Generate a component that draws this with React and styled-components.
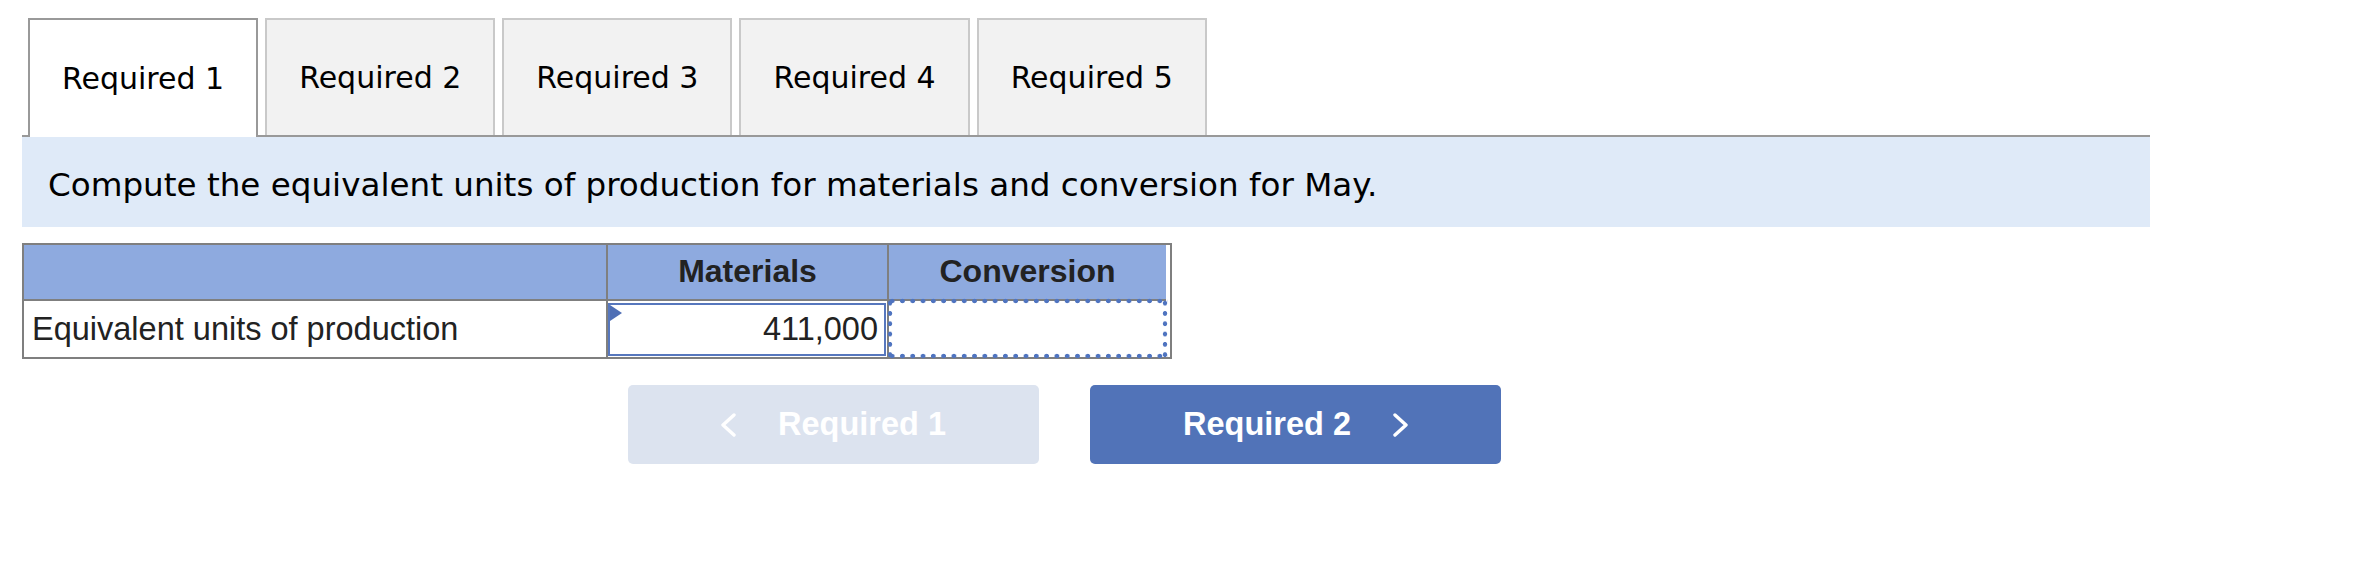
import styled, { createGlobalStyle } from 'styled-components'

const GlobalStyle = createGlobalStyle`
  html, body {
    margin: 0;
    padding: 0;
    background: #ffffff;
  }
`

const tabs = ['Required 1', 'Required 2', 'Required 3', 'Required 4', 'Required 5']

function Chevron({ dir }) {
  const points = dir === 'left' ? '13,2 2,12 13,22' : '2,2 13,12 2,22'
  return (
    <svg width="15" height="24" viewBox="0 0 15 24">
      <polyline
        points={points}
        fill="none"
        stroke="#ffffff"
        strokeWidth="3.4"
        strokeLinecap="round"
        strokeLinejoin="round"
      />
    </svg>
  )
}

function App() {
  return (
    <Page>
      <GlobalStyle />
      <TabBar>
        {tabs.map((t, i) => (
          <Tab key={t} $active={i === 0}>
            {t}
          </Tab>
        ))}
      </TabBar>
      <Instruction>
        Compute the equivalent units of production for materials and conversion for May.
      </Instruction>
      <Table>
        <HeadCell />
        <HeadCell>Materials</HeadCell>
        <HeadCell $last>Conversion</HeadCell>
        <LabelCell>Equivalent units of production</LabelCell>
        <InputCell>
          <AmountBox>
            <Marker />
            411,000
          </AmountBox>
        </InputCell>
        <EmptyCell>
          <DottedFrame />
        </EmptyCell>
      </Table>
      <NavRow>
        <NavButton $disabled>
          <Chevron dir="left" />
          Required 1
        </NavButton>
        <NavButton>
          Required 2
          <Chevron dir="right" />
        </NavButton>
      </NavRow>
    </Page>
  )
}

export default App

const Page = styled.div`
  width: 2128px;
  padding: 18px 0 0 22px;
`

const TabBar = styled.div`
  display: flex;
  align-items: flex-start;
  gap: 7px;
  height: 117px;
  padding-left: 6px;
  border-bottom: 2px solid #999999;
`

const Tab = styled.div`
  display: flex;
  align-items: center;
  justify-content: center;
  box-sizing: border-box;
  height: ${({ $active }) => ($active ? '119px' : '117px')};
  padding: 0 32px;
  background: ${({ $active }) => ($active ? '#ffffff' : '#f2f2f2')};
  border: 2px solid ${({ $active }) => ($active ? '#999999' : '#c9c9c9')};
  border-bottom: none;
  font-family: 'DejaVu Sans', Verdana, sans-serif;
  font-size: 30px;
  color: #000000;
  white-space: nowrap;
`

const Instruction = styled.div`
  display: flex;
  align-items: center;
  height: 90px;
  padding: 5px 0 0 26px;
  box-sizing: border-box;
  background: #dfeaf8;
  font-family: 'DejaVu Sans', Verdana, sans-serif;
  font-size: 32.6px;
  color: #000000;
`

const Table = styled.div`
  display: grid;
  grid-template-columns: 584px 281px 277px;
  grid-template-rows: 56px 56px;
  width: 1146px;
  margin-top: 16px;
  border: 2px solid #7f7f7f;
  font-family: 'Liberation Sans', Arial, sans-serif;
  font-size: 32.5px;
  color: #222222;
`

const HeadCell = styled.div`
  display: flex;
  align-items: center;
  justify-content: center;
  background: #8eaadf;
  border-bottom: 2px solid #7f7f7f;
  border-right: ${({ $last }) => ($last ? 'none' : '2px solid #7f7f7f')};
  font-weight: 700;
  font-size: 32px;
  padding-bottom: 2px;
`

const LabelCell = styled.div`
  display: flex;
  align-items: center;
  padding-left: 8px;
  border-right: 2px solid #7f7f7f;
`

const InputCell = styled.div`
  display: flex;
  padding: 2px 1px 1px 0;
  border-right: 2px solid #7f7f7f;
`

const AmountBox = styled.div`
  position: relative;
  flex: 1;
  display: flex;
  align-items: center;
  justify-content: flex-end;
  padding-right: 6px;
  border: 2px solid #5777bd;
  background: #ffffff;
`

const Marker = styled.span`
  position: absolute;
  top: 0;
  left: 0;
  width: 0;
  height: 0;
  border-top: 8px solid transparent;
  border-bottom: 8px solid transparent;
  border-left: 12px solid #4f6fb5;
`

const EmptyCell = styled.div`
  position: relative;
`

const dot = 'radial-gradient(circle, #4f74c0 2px, transparent 2.6px)'

const DottedFrame = styled.div`
  position: absolute;
  top: -3px;
  left: -2px;
  right: -2px;
  bottom: -2px;
  background:
    ${dot} 0 0 / 10.3px 6px repeat-x,
    ${dot} 0 100% / 10.3px 6px repeat-x,
    ${dot} 0 0 / 6px 10.3px repeat-y,
    ${dot} 100% 0 / 6px 10.3px repeat-y;
`

const NavRow = styled.div`
  display: flex;
  gap: 51px;
  margin-top: 26px;
  padding-left: 606px;
`

const NavButton = styled.div`
  display: flex;
  align-items: center;
  justify-content: center;
  gap: 42px;
  width: 411px;
  height: 79px;
  border-radius: 5px;
  background: ${({ $disabled }) => ($disabled ? '#dce3ef' : '#5173b8')};
  color: #ffffff;
  font-family: 'Liberation Sans', Arial, sans-serif;
  font-size: 32.5px;
  font-weight: 700;
  box-sizing: border-box;
`
